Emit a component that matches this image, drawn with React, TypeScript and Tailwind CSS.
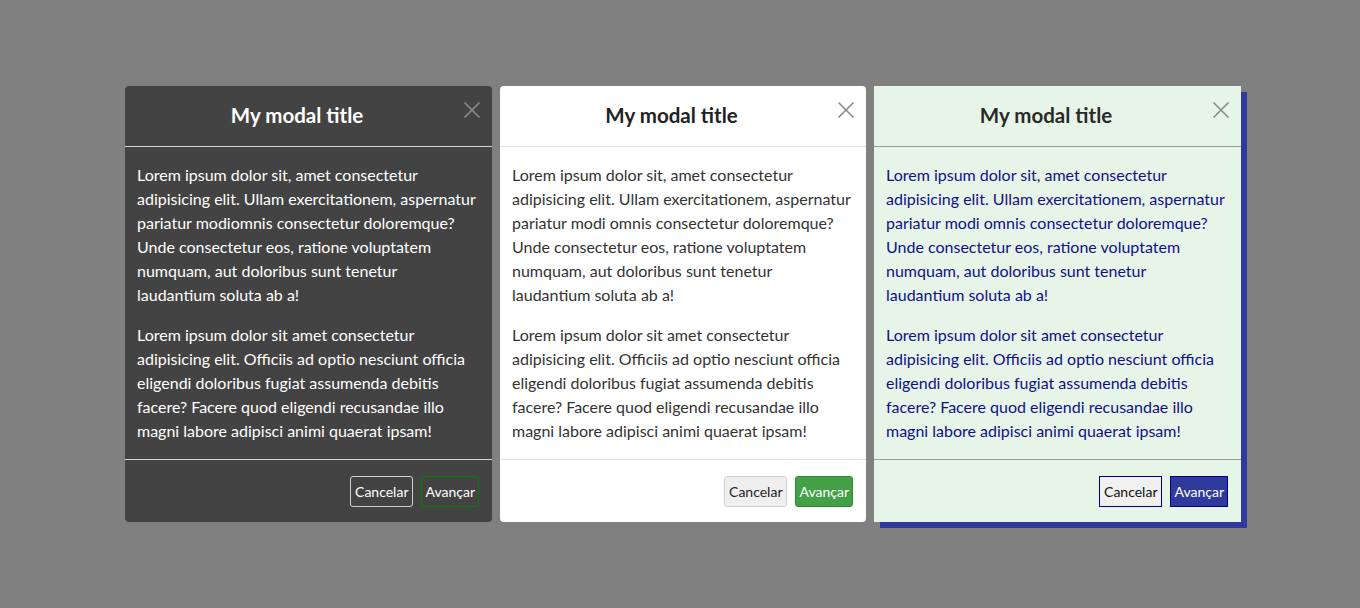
import React from 'react';

const p1 =
  'Lorem ipsum dolor sit, amet consectetur adipisicing elit. Ullam exercitationem, aspernatur pariatur modiomnis consectetur doloremque? Unde consectetur eos, ratione voluptatem numquam, aut doloribus sunt tenetur laudantium soluta ab a!';
const p1b =
  'Lorem ipsum dolor sit, amet consectetur adipisicing elit. Ullam exercitationem, aspernatur pariatur modi omnis consectetur doloremque? Unde consectetur eos, ratione voluptatem numquam, aut doloribus sunt tenetur laudantium soluta ab a!';
const p2 =
  'Lorem ipsum dolor sit amet consectetur adipisicing elit. Officiis ad optio nesciunt officia eligendi doloribus fugiat assumenda debitis facere? Facere quod eligendi recusandae illo magni labore adipisci animi quaerat ipsam!';

type Theme = {
  card: string;
  title: string;
  divider: string;
  body: string;
  cancel: string;
  next: string;
  first: string;
};

const themes: Theme[] = [
  {
    card: 'w-[367px] bg-[#434343] rounded-[4px]',
    title: 'text-white',
    divider: 'border-[#d4d4d4]',
    body: 'text-white',
    cancel: 'border border-[#d0d0d0] text-white rounded-[3px]',
    next: 'border border-[#008000] text-white rounded-[3px]',
    first: p1,
  },
  {
    card: 'w-[366px] bg-white rounded-[4px]',
    title: 'text-[#222]',
    divider: 'border-[#dee2e6]',
    body: 'text-[#333]',
    cancel: 'border border-[#cfcfcf] bg-[#efefef] text-[#222] rounded-[3px]',
    next: 'border border-[#2f8a2f] bg-[#43a047] text-white rounded-[3px]',
    first: p1b,
  },
  {
    card: 'w-[367px] bg-[#e7f5e8] shadow-[6px_6px_0_#2f3a9c]',
    title: 'text-[#2a2a2a]',
    divider: 'border-[#9a9a9a]',
    body: 'text-[#101088]',
    cancel: 'border border-[#000080] bg-[#f0f0f0] text-[#111]',
    next: 'border border-[#000080] bg-[#2f3a9c] text-white',
    first: p1b,
  },
];

function CloseIcon() {
  return (
    <svg width="18" height="18" viewBox="0 0 18 18" fill="none" stroke="#8a8a8a" strokeWidth="1.6">
      <path d="M1.5 1.5 L16.5 16.5 M16.5 1.5 L1.5 16.5" />
    </svg>
  );
}

function Modal({ t }: { t: Theme }) {
  return (
    <div className={`h-[436px] flex flex-col ${t.card}`}>
      <div className={`relative h-[61px] flex items-center justify-center pr-[23px] border-b ${t.divider}`}>
        <h5 className={`text-[20.5px] font-bold leading-none -mt-[2px] ${t.title}`}>My modal title</h5>
        <button className="absolute right-[11px] top-[15px]">
          <CloseIcon />
        </button>
      </div>
      <div className={`flex-1 pl-3 pr-[14px] pt-4 text-[16px] leading-6 ${t.body}`}>
        <p className="mb-4">{t.first}</p>
        <p>{p2}</p>
      </div>
      <div className={`h-[63px] border-t ${t.divider} flex items-center justify-end gap-2 pr-[13px] pt-[1px]`}>
        <button className={`h-[31px] px-[4px] text-[14px] ${t.cancel}`}>Cancelar</button>
        <button className={`h-[31px] px-[3px] text-[14px] ${t.next}`}>Avançar</button>
      </div>
    </div>
  );
}

export default function App() {
  return (
    <div
      className="w-[1360px] h-[608px] bg-[#808080] pl-[125px] pt-[86px] flex items-start gap-2"
      style={{ fontFamily: 'Lato, "Open Sans", sans-serif' }}
    >
      {themes.map((t, i) => (
        <Modal key={i} t={t} />
      ))}
    </div>
  );
}
